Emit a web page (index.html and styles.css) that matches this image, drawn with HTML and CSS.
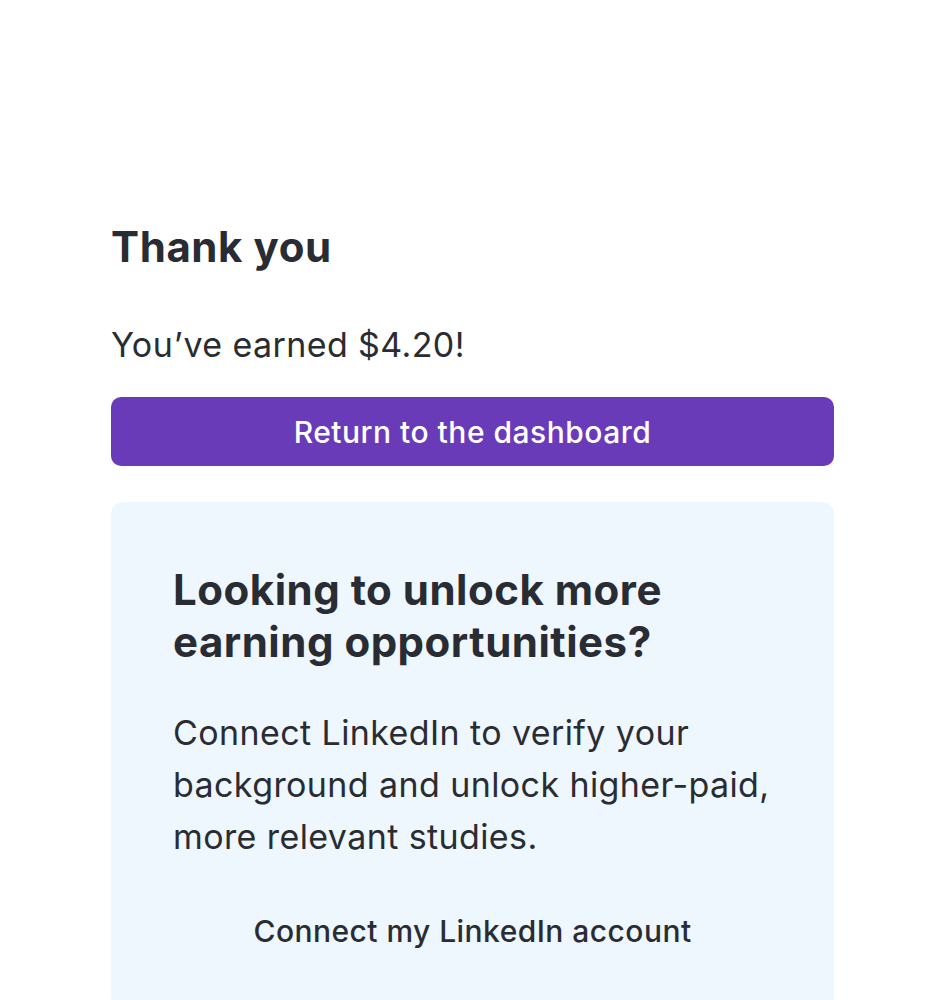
FILE: index.html
```html
<!DOCTYPE html>
<html lang="en">
<head>
<meta charset="utf-8">
<link rel="stylesheet" href="styles.css">
<title>Thank you</title>
</head>
<body>
<main class="page">
  <h1 class="title">Thank you</h1>
  <p class="earned">You’ve earned $4.20!</p>
  <a class="btn" href="#">Return to the dashboard</a>
  <section class="card">
    <h2 class="card-title">Looking to unlock more earning opportunities?</h2>
    <p class="card-text">Connect LinkedIn to verify your background and unlock higher-paid, more relevant studies.</p>
    <a class="link" href="#">Connect my LinkedIn account</a>
  </section>
</main>
</body>
</html>
```

FILE: styles.css
```css
html, body {
  margin: 0;
  padding: 0;
  background: #ffffff;
}
body {
  font-family: Inter, "Noto Sans", sans-serif;
  color: #2a2c33;
}
.page {
  width: 723px;
  margin: 0 auto;
  padding-top: 222px;
  display: flex;
  flex-direction: column;
}
.title {
  margin: 0;
  font-size: 42px;
  line-height: 50px;
  font-weight: 700;
  letter-spacing: 0.6px;
}
.earned {
  margin: 53px 0 0;
  font-size: 34px;
  line-height: 40px;
  font-weight: 400;
  letter-spacing: 0.4px;
}
.btn {
  margin-top: 32px;
  height: 69px;
  border-radius: 10px;
  background: #6a3bb8;
  color: #ffffff;
  text-decoration: none;
  display: flex;
  align-items: center;
  justify-content: center;
  font-size: 30px;
  font-weight: 500;
  letter-spacing: 0.5px;
}
.card {
  margin-top: 36px;
  background: #eef6fe;
  border-radius: 12px;
  padding: 62px 62px 60px;
  display: flex;
  flex-direction: column;
}
.card-title {
  margin: 0;
  font-size: 42px;
  line-height: 52px;
  font-weight: 700;
  letter-spacing: 0.5px;
  max-width: 540px;
}
.card-text {
  margin: 39px 0 0;
  font-size: 34px;
  line-height: 52px;
  font-weight: 400;
  letter-spacing: 0.4px;
}
.link {
  margin-top: 50px;
  align-self: center;
  color: #2a2c33;
  text-decoration: none;
  font-size: 30px;
  font-weight: 500;
  letter-spacing: 0.45px;
}
```
